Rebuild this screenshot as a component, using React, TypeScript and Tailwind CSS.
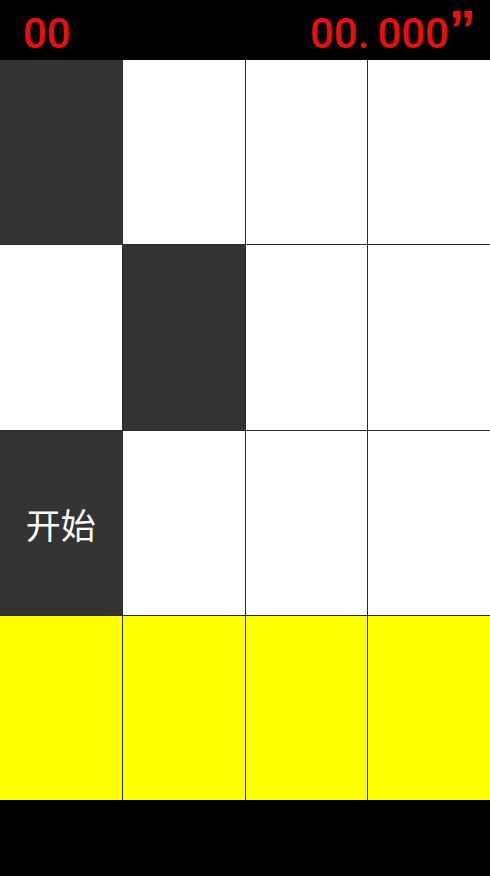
const rows: ("dark" | "white" | "yellow")[][] = [
  ["dark", "white", "white", "white"],
  ["white", "dark", "white", "white"],
  ["dark", "white", "white", "white"],
  ["yellow", "yellow", "yellow", "yellow"],
];

const cellColor = {
  dark: "bg-[#333333]",
  white: "bg-white",
  yellow: "bg-[#ffff00]",
};

export default function App() {
  return (
    <div className="flex h-[876px] w-[490px] flex-col bg-black font-['Liberation_Sans','Noto_Sans_CJK_SC',sans-serif]">
      <div className="flex h-[60px] items-center justify-between pl-[23px] pr-[14px] pt-[8px] font-['Roboto',sans-serif] text-[42px] font-medium leading-none text-[#e8100f]">
        <span>00</span>
        <span className="flex items-center">
          <span>00.</span>
          <span className="ml-[8px]">000</span>
          <span className="-mt-[10px] self-start font-['Liberation_Sans',sans-serif] text-[54px] font-bold leading-none">”</span>
        </span>
      </div>
      <div className="grid h-[740px] grid-cols-4 grid-rows-4 gap-px bg-[#2a2a2a]">
        {rows.map((row, r) =>
          row.map((c, i) => (
            <div key={`${r}-${i}`} className={`flex items-center justify-center ${cellColor[c]}`}>
              {r === 2 && i === 0 && (
                <span className="pt-[10px] text-[35px] text-white">开始</span>
              )}
            </div>
          ))
        )}
      </div>
      <div className="flex-1 bg-black" />
    </div>
  );
}
